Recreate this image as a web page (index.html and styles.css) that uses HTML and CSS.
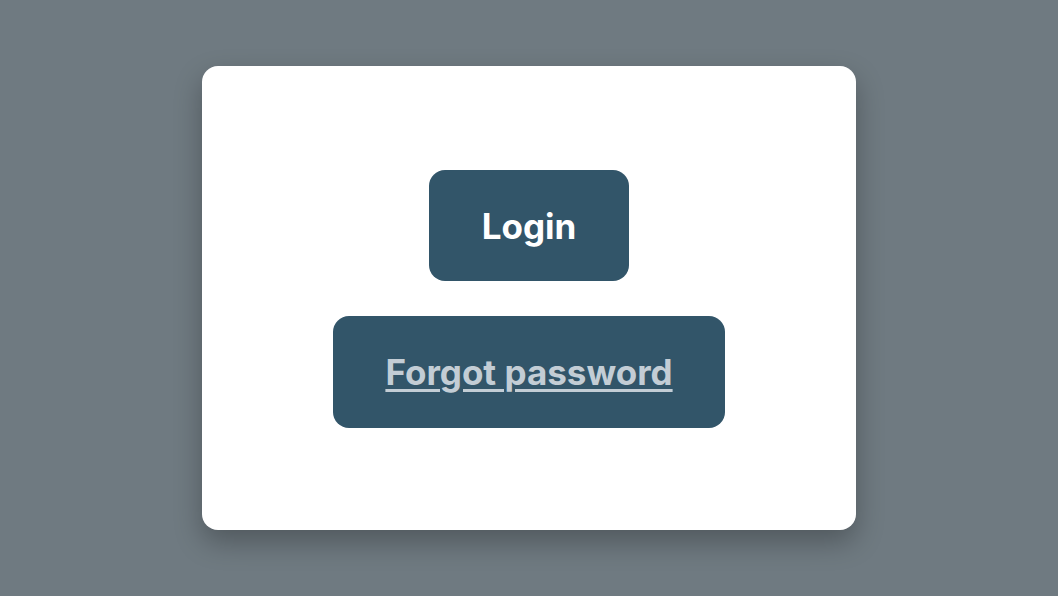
FILE: index.html
```html
<!DOCTYPE html>
<html>
<head>
<meta charset="utf-8">
<link rel="stylesheet" href="styles.css">
</head>
<body>
<div class="card">
  <button class="btn btn-login">Login</button>
  <button class="btn btn-forgot"><span class="link">Forgot password</span></button>
</div>
</body>
</html>
```
FILE: styles.css
```css
html, body {
  margin: 0;
  height: 100%;
}
body {
  background: #6f7a81;
  display: flex;
  align-items: center;
  justify-content: center;
  font-family: Inter, "Liberation Sans", sans-serif;
}
.card {
  width: 654px;
  height: 464px;
  padding-top: 2px;
  background: #ffffff;
  border-radius: 16px;
  box-shadow: 0 12px 28px rgba(0, 0, 0, 0.28);
  display: flex;
  flex-direction: column;
  align-items: center;
  justify-content: center;
  gap: 35px;
  box-sizing: border-box;
}
.btn {
  border: none;
  background: #325569;
  border-radius: 16px;
  font-family: Inter, "Liberation Sans", sans-serif;
  font-weight: 700;
  font-size: 35px;
  padding: 0 52.5px;
  height: 111px;
  cursor: pointer;
}
.btn-login {
  color: #ffffff;
}
.btn-forgot {
  height: 112px;
  color: #c3cdd5;
}
.link {
  text-decoration: underline;
  text-underline-offset: 4px;
  text-decoration-thickness: 3px;
}
```
